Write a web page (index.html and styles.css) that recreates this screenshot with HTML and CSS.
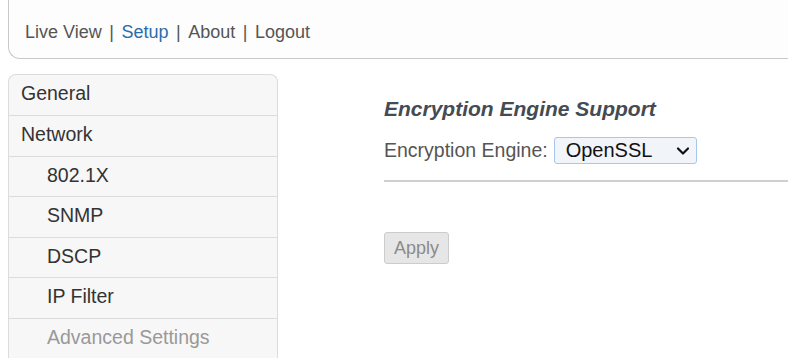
FILE: index.html
```html
<!DOCTYPE html>
<html>
<head>
<meta charset="utf-8">
<link rel="stylesheet" href="styles.css">
</head>
<body>
<div class="page">
  <header class="topbar">
    <nav class="topnav">
      <a class="nav-link">Live View</a><span class="sep">|</span><a class="nav-link active">Setup</a><span class="sep">|</span><a class="nav-link">About</a><span class="sep">|</span><a class="nav-link">Logout</a>
    </nav>
  </header>
  <div class="layout">
    <aside class="sidebar">
      <div class="side-item">General</div>
      <div class="side-item">Network</div>
      <div class="side-item sub">802.1X</div>
      <div class="side-item sub">SNMP</div>
      <div class="side-item sub">DSCP</div>
      <div class="side-item sub">IP Filter</div>
      <div class="side-item sub muted">Advanced Settings</div>
    </aside>
    <main class="content">
      <h2 class="section-title">Encryption Engine Support</h2>
      <div class="field">
        <label class="field-label">Encryption Engine:</label>
        <div class="select">
          <span class="select-value">OpenSSL</span>
          <svg class="chev" width="14" height="10" viewBox="0 0 14 10"><path d="M2 2.5 L7 7.5 L12 2.5" fill="none" stroke="#111" stroke-width="2.2" stroke-linecap="round" stroke-linejoin="round"/></svg>
        </div>
      </div>
      <hr class="divider">
      <button class="btn" disabled>Apply</button>
    </main>
  </div>
</div>
</body>
</html>
```
FILE: styles.css
```css
html, body {
  margin: 0;
  padding: 0;
  background: #ffffff;
  font-family: "Liberation Sans", Arial, sans-serif;
  overflow: hidden;
}
.page {
  padding-left: 9px;
}
.topbar {
  height: 58px;
  background: #fdfdfd;
  border-left: 1px solid #c8c8c8;
  border-bottom: 1px solid #c8c8c8;
  border-bottom-left-radius: 12px;
  box-sizing: content-box;
  margin-left: -1px;
}
.topnav {
  padding: 20px 0 0 16px;
  font-size: 18px;
  color: #555;
  line-height: 24px;
}
.nav-link { color: #555; }
.nav-link.active { color: #2b6cab; }
.sep { color: #555; margin: 0 7.5px; }
.layout {
  display: flex;
  margin-top: 15px;
}
.sidebar {
  width: 268px;
  flex: none;
  background: #f7f7f7;
  border: 1px solid #dcdcdc;
  border-bottom: none;
  border-radius: 8px 8px 0 0;
  margin-left: -1px;
}
.side-item {
  line-height: 36px;
  padding-left: 12px;
  font-size: 19.5px;
  color: #333;
  border-top: 1px solid #dcdcdc;
  box-sizing: border-box;
  height: 40.5px;
}
.side-item:first-child { border-top: none; height: 40px; }
.side-item.sub { padding-left: 38px; }
.side-item.muted { color: #999; }
.content {
  flex: 1;
  padding-left: 106px;
  padding-top: 22px;
}
.section-title {
  margin: 0;
  font-size: 21px;
  font-style: italic;
  font-weight: bold;
  color: #444b53;
  line-height: 26px;
}
.field {
  display: flex;
  align-items: center;
  margin-top: 15px;
}
.field-label {
  font-size: 19.5px;
  color: #555;
  margin-right: 6px;
}
.select {
  width: 143px;
  height: 27px;
  box-sizing: border-box;
  border: 1px solid #a9c6ec;
  border-radius: 3px;
  background: #f1f4f9;
  display: flex;
  align-items: center;
  justify-content: space-between;
  padding: 0 6px 0 11px;
}
.select-value {
  font-size: 20px;
  color: #111;
}
.chev { display: block; }
.divider {
  border: none;
  border-top: 2px solid #cfcfcf;
  margin: 16px 0 0 0;
}
.btn {
  margin-top: 50px;
  width: 65px;
  height: 32px;
  background: #e6e6e6;
  border: 1px solid #cccccc;
  border-radius: 3px;
  color: #8a8a8a;
  font-family: "Liberation Sans", Arial, sans-serif;
  font-size: 18px;
  padding: 0;
}
```
